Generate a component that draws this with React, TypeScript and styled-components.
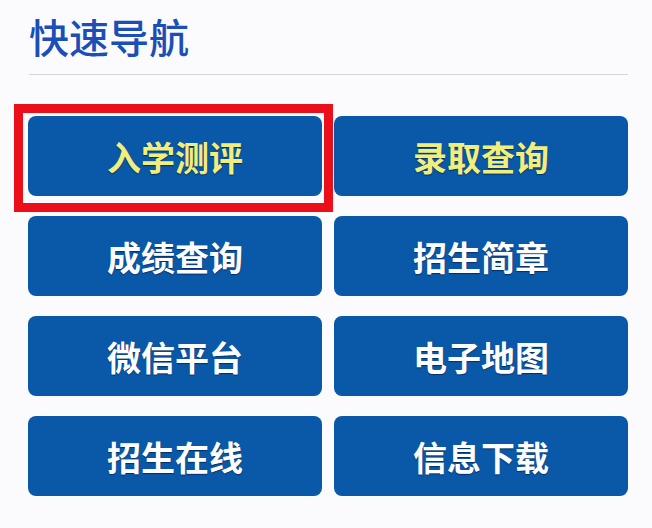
import React from "react";
import styled, { createGlobalStyle } from "styled-components";

const Global = createGlobalStyle`
  html, body { margin: 0; padding: 0; background: #fbfbfd; }
  body { font-family: "Noto Sans CJK SC", "Noto Sans", sans-serif; }
`;

const Page = styled.div`
  width: 652px;
  height: 528px;
  box-sizing: border-box;
  padding: 9px 24px 0 28px;
  background: #fbfbfd;
  overflow: hidden;
`;

const Title = styled.h1`
  margin: 0 0 0 1px;
  font-size: 40px;
  line-height: 54px;
  font-weight: 500;
  color: #1b4fb8;
  letter-spacing: 0px;
`;

const Divider = styled.div`
  height: 1px;
  background: #d6d6da;
  margin: 11px 0 41px 1px;
`;

const Grid = styled.div`
  display: grid;
  grid-template-columns: 294px 294px;
  column-gap: 12px;
  row-gap: 20px;
`;

const Cell = styled.div<{ $marked?: boolean }>`
  position: relative;
  ${(p) =>
    p.$marked &&
    `
    &::after {
      content: "";
      position: absolute;
      top: -12px;
      left: -14px;
      right: -11px;
      bottom: -16px;
      border: 9px solid #ea0f18;
      pointer-events: none;
    }
  `}
`;

const NavButton = styled.a<{ $yellow?: boolean }>`
  display: flex;
  align-items: center;
  justify-content: center;
  height: 80px;
  border-radius: 8px;
  background: #0a58a8;
  color: ${(p) => (p.$yellow ? "#f2ee7a" : "#ffffff")};
  font-size: 34px;
  font-weight: 700;
  text-decoration: none;
  text-shadow: 0 1px 1px rgba(0, 20, 60, 0.6);
`;

const items = [
  { label: "入学测评", yellow: true, marked: true },
  { label: "录取查询", yellow: true },
  { label: "成绩查询" },
  { label: "招生简章" },
  { label: "微信平台" },
  { label: "电子地图" },
  { label: "招生在线" },
  { label: "信息下载" },
];

export default function App() {
  return (
    <>
      <Global />
      <Page>
        <Title>快速导航</Title>
        <Divider />
        <Grid>
          {items.map((it) => (
            <Cell key={it.label} $marked={it.marked}>
              <NavButton $yellow={it.yellow}>{it.label}</NavButton>
            </Cell>
          ))}
        </Grid>
      </Page>
    </>
  );
}
